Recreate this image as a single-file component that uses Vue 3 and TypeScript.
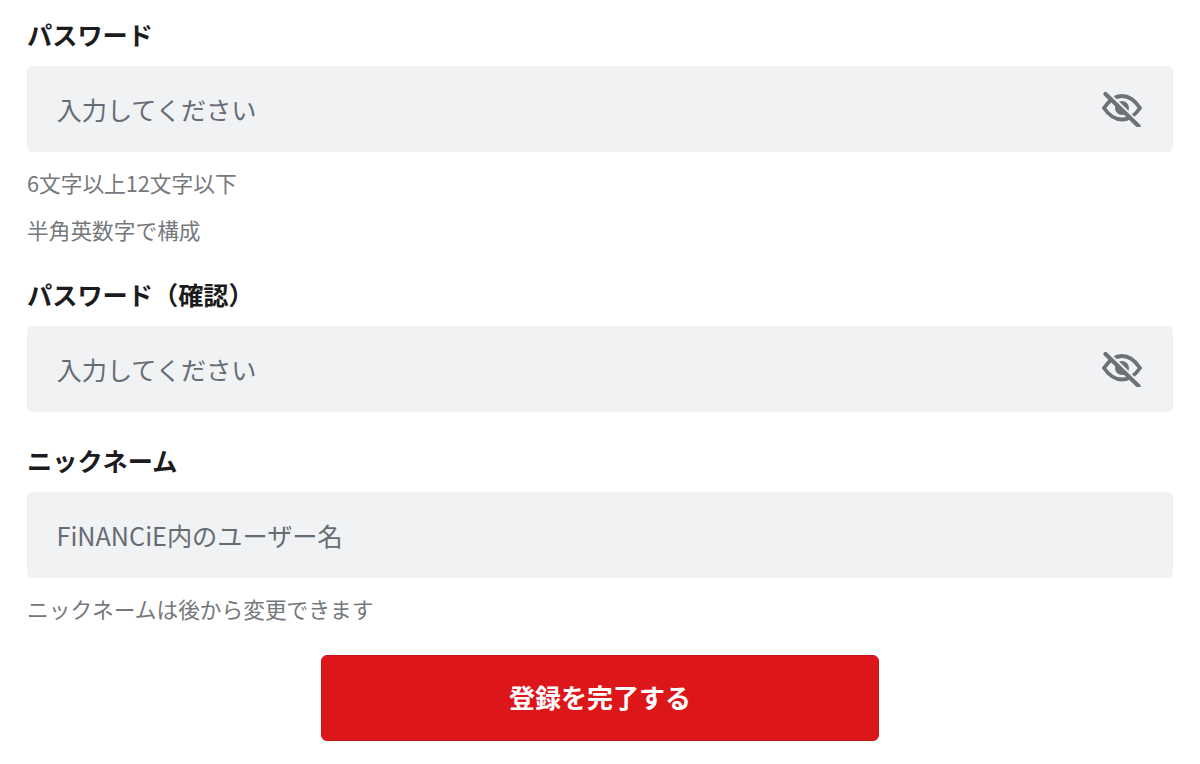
<script setup lang="ts">
interface Field {
  label: string
  placeholder: string
  secret: boolean
  hints: string[]
}

const fields: Field[] = [
  { label: 'パスワード', placeholder: '入力してください', secret: true, hints: ['6文字以上12文字以下', '半角英数字で構成'] },
  { label: 'パスワード（確認）', placeholder: '入力してください', secret: true, hints: [] },
  { label: 'ニックネーム', placeholder: 'FiNANCiE内のユーザー名', secret: false, hints: ['ニックネームは後から変更できます'] },
]
</script>

<template>
  <form class="form" @submit.prevent>
    <div v-for="f in fields" :key="f.label" class="field">
      <label class="label">{{ f.label }}</label>
      <div class="input">
        <span class="placeholder">{{ f.placeholder }}</span>
        <svg v-if="f.secret" class="eye" viewBox="0 0 40 36" width="40" height="36" fill="none">
          <path d="M2 17C7 9.500 13 5 20 5S33 9.500 38 17C33 24.500 27 28.500 20 28.500S7 24.500 2 17Z" stroke="#6e7175" stroke-width="3.800" />
          <circle cx="20" cy="17" r="7" fill="#6e7175" />
          <path d="M5 1.500 38 34" stroke="#f1f2f4" stroke-width="4" />
          <path d="M3.500 3 36.500 35" stroke="#6e7175" stroke-width="4.200" stroke-linecap="round" />
        </svg>
      </div>
      <p v-for="h in f.hints" :key="h" class="hint">{{ h }}</p>
    </div>
    <button class="submit" type="submit">登録を完了する</button>
  </form>
</template>

<style scoped>
.form {
  box-sizing: border-box;
  width: 1200px;
  height: 764px;
  padding: 16px 27px 0;
  display: flex;
  flex-direction: column;
  background: #fff;
  font-family: "Noto Sans CJK JP", "Noto Sans", sans-serif;
}
.field {
  display: flex;
  flex-direction: column;
  margin-bottom: 30px;
}
.label {
  font-size: 25.200px;
  line-height: 36px;
  font-weight: 700;
  color: #1c1c1e;
  margin-bottom: 14px;
}
.input {
  box-sizing: border-box;
  height: 86px;
  padding: 0 31px 0 29.500px;
  display: flex;
  align-items: center;
  justify-content: space-between;
  background: #f1f2f4;
  border-radius: 6px;
}
.placeholder {
  font-size: 25.200px;
  color: #666c73;
}
.hint {
  margin: 16px 0 2px;
  font-size: 21.700px;
  line-height: 29px;
  color: #75787c;
}
.hint + .hint {
  margin-top: 16px;
}
.submit {
  align-self: center;
  box-sizing: border-box;
  width: 558px;
  height: 86px;
  padding: 0 0 3px;
  border: 1px solid #c4181c;
  border-radius: 6px;
  background: #dd161a;
  color: #fff;
  font-family: inherit;
  font-size: 26px;
  font-weight: 700;
}
</style>
